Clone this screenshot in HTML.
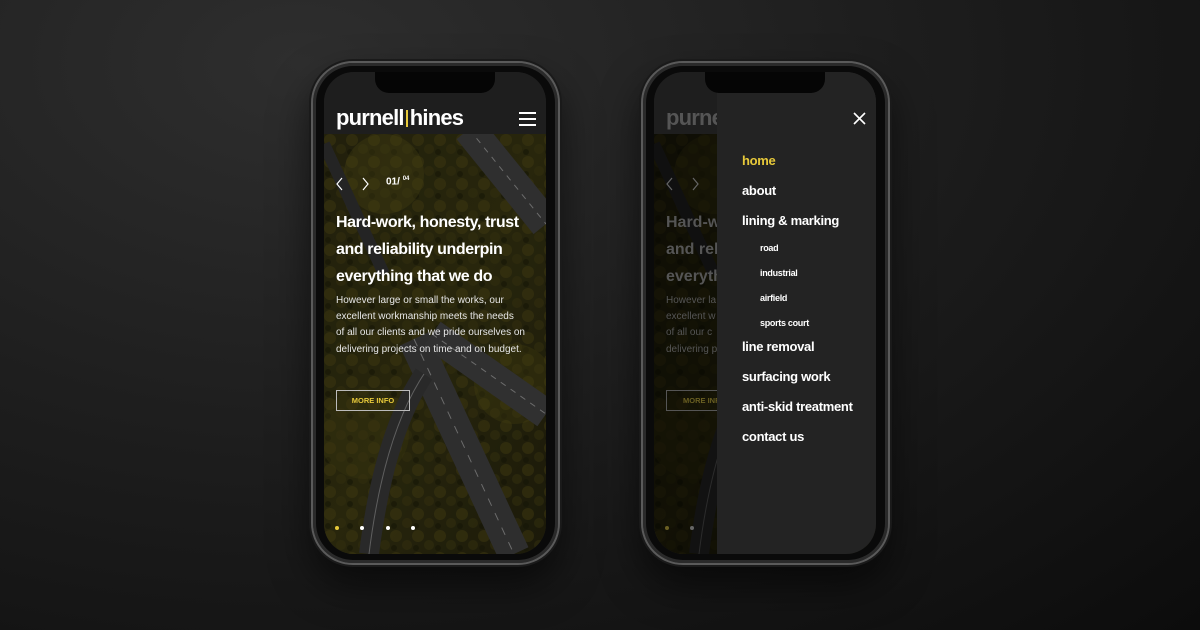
<!DOCTYPE html>
<html><head><meta charset="utf-8"><style>
*{margin:0;padding:0;box-sizing:border-box}
body{width:1200px;height:630px;overflow:hidden;background:radial-gradient(ellipse at 25% 10%,#2e2e2e 0%,#1e1e1e 45%,#0c0c0c 100%);font-family:"Liberation Sans",sans-serif;position:relative}
.phone{position:absolute;top:61px;width:249px;height:504px;border-radius:42px;background:#0a0a0a;border:2px solid #5a5a5a;box-shadow:0 0 0 2px #1a1a1a,0 20px 40px rgba(0,0,0,.6),inset 0 0 0 3px #2a2a2a}
.screen{position:absolute;left:11px;top:9px;width:222px;height:482px;border-radius:30px;overflow:hidden;background:#1c1c1c}
.notch{position:absolute;left:50%;top:0;width:120px;height:21px;margin-left:-60px;background:#050505;border-radius:0 0 14px 14px;z-index:5}
.hdr{position:absolute;left:0;top:0;width:100%;height:62px;background:#1e1e1e}
.logo{position:absolute;left:12px;top:33px;color:#fff;font-weight:bold;font-size:22px;letter-spacing:-.8px}
.logo i{display:inline-block;width:2px;height:17px;background:#e7c93a;margin:0 2px;vertical-align:-2px}
.burg{position:absolute;left:195px;top:40px;width:17px}
.burg b{display:block;height:2px;background:#fff;margin-bottom:4px}
.photo{position:absolute;left:0;top:62px;width:100%;height:420px}
.t{position:absolute;color:#fff}
.menu{position:absolute;left:63px;top:0;width:160px;height:100%;background:#232323;z-index:4}
.menu div{position:absolute;left:25px;color:#fff;font-weight:bold;font-size:13px;letter-spacing:-.3px}
.menu .s{left:43px;font-size:9px}
</style></head><body>

<svg width="0" height="0" style="position:absolute"><defs>
<linearGradient id="g" x1="0" y1="0" x2="1" y2="1"><stop offset="0" stop-color="#2a2810"/><stop offset=".5" stop-color="#323010"/><stop offset="1" stop-color="#22200c"/></linearGradient>
<pattern id="tr" width="22" height="22" patternUnits="userSpaceOnUse"><circle cx="6" cy="6" r="6" fill="#4a4414" opacity=".55"/><circle cx="17" cy="15" r="5" fill="#3d3912" opacity=".6"/><circle cx="4" cy="18" r="3" fill="#1b1a08" opacity=".6"/></pattern>
<g id="ph">
<rect width="222" height="420" fill="url(#g)"/>
<rect width="222" height="420" fill="url(#tr)"/>
<circle cx="60" cy="40" r="40" fill="#5a5318" opacity=".35"/><circle cx="190" cy="250" r="40" fill="#5a5318" opacity=".3"/><circle cx="40" cy="300" r="45" fill="#4a4414" opacity=".35"/>
<path d="M145 -5 L222 90" stroke="#3b3b3b" stroke-width="32"/>
<path d="M145 -5 L222 90" stroke="#888" stroke-width="1" stroke-dasharray="6 6"/>
<path d="M0 10 L60 140" stroke="#2e2e2e" stroke-width="12"/>
<path d="M90 205 L190 420" stroke="#3a3a3a" stroke-width="32"/>
<path d="M90 205 L190 420" stroke="#888" stroke-width="1" stroke-dasharray="8 8"/>
<path d="M108 200 L222 280" stroke="#3c3c3c" stroke-width="30"/>
<path d="M108 200 L222 280" stroke="#888" stroke-width="1" stroke-dasharray="6 6"/>
<path d="M100 240 Q60 300 45 420" stroke="#343434" stroke-width="20" fill="none"/>
<path d="M100 240 Q60 300 45 420" stroke="#777" stroke-width="1" fill="none"/>
<rect width="222" height="420" fill="#000" opacity=".2"/>
</g></defs></svg>

<!-- left phone -->
<div class="phone" style="left:311px">
<div class="screen">
<div class="notch"></div>
<div class="hdr"><div class="logo">purnell<i></i>hines</div><div class="burg"><b></b><b></b><b></b></div></div>
<svg class="photo" viewBox="0 0 222 420"><use href="#ph"/></svg>
<svg style="position:absolute;left:11px;top:105px" width="40" height="14"><path d="M7 1L2 7L7 13M28 1L33 7L28 13" stroke="#fff" stroke-width="1.2" fill="none"/></svg>
<div class="t" style="left:62px;top:104px;font-size:10px;font-weight:bold">01/ <sup style="font-size:6px">04</sup></div>
<div class="t" style="left:12px;top:137px;font-size:16px;font-weight:bold;line-height:27px;letter-spacing:-.4px">Hard-work, honesty, trust<br>and reliability underpin<br>everything that we do</div>
<div class="t" style="left:12px;top:221px;font-size:10px;line-height:16.2px;color:#e6e6e6">However large or small the works, our<br>excellent workmanship meets the needs<br>of all our clients and we pride ourselves on<br>delivering projects on time and on budget.</div>
<div class="t" style="left:12px;top:318px;width:74px;height:21px;border:1px solid #bbb;color:#e7c93a;font-size:7.5px;font-weight:bold;text-align:center;line-height:19px">MORE INFO</div>
<div style="position:absolute;top:454px;left:11px;width:4px;height:4px;border-radius:2px;background:#e7c93a"></div>
<div style="position:absolute;top:454px;left:36px;width:4px;height:4px;border-radius:2px;background:#fff"></div>
<div style="position:absolute;top:454px;left:62px;width:4px;height:4px;border-radius:2px;background:#fff"></div>
<div style="position:absolute;top:454px;left:87px;width:4px;height:4px;border-radius:2px;background:#fff"></div>
</div></div>

<!-- right phone -->
<div class="phone" style="left:641px">
<div class="screen">
<div class="notch"></div>
<div class="hdr"><div class="logo" style="color:#555">purnell</div></div>
<svg class="photo" viewBox="0 0 222 420"><use href="#ph"/><rect width="222" height="420" fill="#000" opacity=".55"/></svg>
<svg style="position:absolute;left:11px;top:105px" width="40" height="14"><path d="M7 1L2 7L7 13M28 1L33 7L28 13" stroke="#666" stroke-width="1.2" fill="none"/></svg>
<div class="t" style="left:12px;top:137px;font-size:16px;font-weight:bold;line-height:27px;color:#555">Hard-work<br>and reli<br>everythi</div>
<div class="t" style="left:12px;top:221px;font-size:10px;line-height:16.2px;color:#555">However la<br>excellent w<br>of all our c<br>delivering p</div>
<div class="t" style="left:12px;top:318px;width:74px;height:21px;border:1px solid #555;color:#6a5f22;font-size:7.5px;font-weight:bold;line-height:19px;padding-left:16px">MORE INFO</div>
<div style="position:absolute;top:454px;left:11px;width:4px;height:4px;border-radius:2px;background:#6a5f22"></div>
<div style="position:absolute;top:454px;left:36px;width:4px;height:4px;border-radius:2px;background:#666"></div>
<div class="menu">
<svg style="position:absolute;left:136px;top:40px" width="13" height="13"><path d="M1 1L12 12M12 1L1 12" stroke="#fff" stroke-width="1.6"/></svg>
<div style="top:81px;color:#e7c93a">home</div>
<div style="top:111px">about</div>
<div style="top:141px">lining &amp; marking</div>
<div class="s" style="top:171px">road</div>
<div class="s" style="top:196px">industrial</div>
<div class="s" style="top:221px">airfield</div>
<div class="s" style="top:246px">sports court</div>
<div style="top:267px">line removal</div>
<div style="top:297px">surfacing work</div>
<div style="top:327px">anti-skid treatment</div>
<div style="top:357px">contact us</div>
</div>
</div></div>
</body></html>
